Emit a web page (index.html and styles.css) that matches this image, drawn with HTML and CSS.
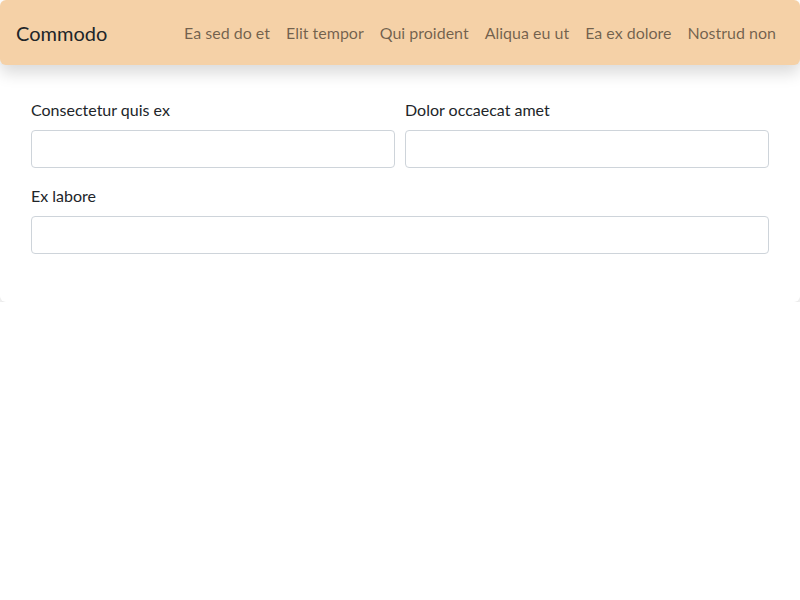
FILE: index.html
```html
<!DOCTYPE html>
<html lang="en">
<head>
<meta charset="utf-8">
<title>Commodo</title>
<link rel="stylesheet" href="styles.css">
</head>
<body>
<div class="page">
  <nav class="navbar">
    <span class="brand">Commodo</span>
    <ul class="nav">
      <li><a href="#">Ea sed do et</a></li>
      <li><a href="#">Elit tempor</a></li>
      <li><a href="#">Qui proident</a></li>
      <li><a href="#">Aliqua eu ut</a></li>
      <li><a href="#">Ea ex dolore</a></li>
      <li><a href="#">Nostrud non</a></li>
    </ul>
  </nav>
  <main class="card">
    <form class="form">
      <div class="row">
        <div class="field">
          <label for="f1">Consectetur quis ex</label>
          <input id="f1" type="text">
        </div>
        <div class="field">
          <label for="f2">Dolor occaecat amet</label>
          <input id="f2" type="text">
        </div>
      </div>
      <div class="row">
        <div class="field">
          <label for="f3">Ex labore</label>
          <input id="f3" type="text">
        </div>
      </div>
    </form>
  </main>
</div>
</body>
</html>
```
FILE: styles.css
```css
* { box-sizing: border-box; }
html, body { margin: 0; padding: 0; background: #fff; }
body {
  font-family: "Lato", "Open Sans", sans-serif;
  font-size: 16px;
  line-height: 24px;
  color: #212529;
}
.page { width: 800px; }
.navbar {
  position: relative;
  z-index: 1;
  height: 65px;
  display: flex;
  align-items: center;
  padding: 0 24px 0 16px;
  background: #f5d1a7;
  border-radius: 6px;
  box-shadow: 0 8px 16px rgba(0,0,0,.15);
}
.brand {
  font-size: 20px;
  color: #212529;
}
.nav {
  list-style: none;
  margin: 0 0 0 auto;
  padding: 0;
  display: flex;
  gap: 16px;
}
.nav a {
  color: rgba(0,0,0,.55);
  text-decoration: none;
  font-size: 16px;
}
.card {
  background: #fff;
  border-radius: 0 0 6px 6px;
  padding: 33px 31px 48px;
  box-shadow: 0 8px 16px rgba(0,0,0,.15);
}
.form { display: flex; flex-direction: column; gap: 16px; }
.row { display: flex; gap: 10px; }
.field { flex: 1; display: flex; flex-direction: column; }
.field label { margin-bottom: 8px; }
.field input {
  height: 38px;
  border: 1px solid #ced4da;
  border-radius: 4px;
  background: #fff;
  font: inherit;
  padding: 6px 12px;
}
```
